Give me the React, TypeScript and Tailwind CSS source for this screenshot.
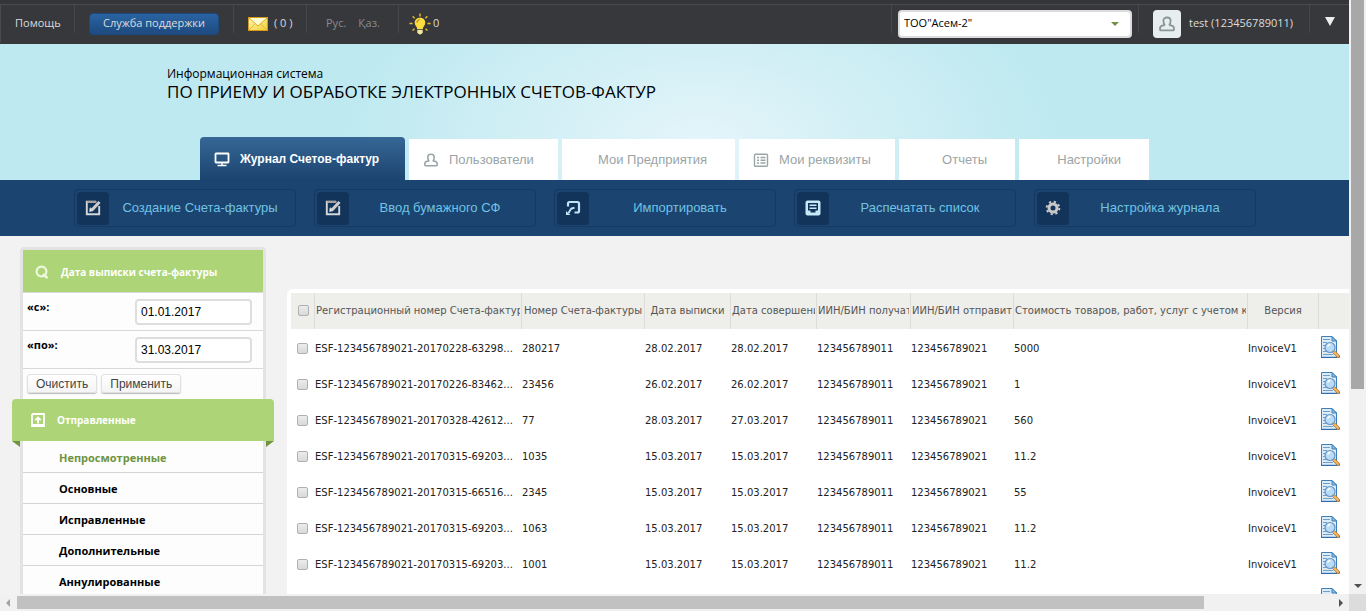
import { useState, type ReactNode } from "react";

const UserIcon = ({ className }: { className: string }) => (
  <svg viewBox="0 0 16 16" className={className} fill="none" stroke="currentColor" strokeWidth="1.6" aria-hidden="true">
    <path d="M6.200 9.200C5 8 4.800 6.500 4.800 5.200 4.800 3.200 6 2.200 8 2.200s3.200 1 3.200 3c0 1.300-.2 2.800-1.400 4" />
    <path d="M6 9.200H4.500Q1.800 9.500 1.800 12v.8q0 .9.9.9h10.600q.9 0 .9-.9V12q0-2.500-2.700-2.800H10" />
  </svg>
);

const MonitorIcon = () => (
  <svg viewBox="0 0 16 16" className="size-4" fill="none" stroke="currentColor" strokeWidth="1.800" aria-hidden="true">
    <rect x="1.500" y="2.500" width="13" height="9" rx="0.500" />
    <path d="M8 11.500v3M3.500 14.500h9" strokeWidth="1.400" />
  </svg>
);

const ListIcon = () => (
  <svg viewBox="0 0 16 16" className="size-4" fill="none" stroke="currentColor" aria-hidden="true">
    <rect x="1.500" y="2.200" width="13" height="12" rx="1" strokeWidth="1.400" />
    <path d="M4 5.500h2M7.500 5.500h5M4 8.200h2M7.500 8.200h5M4 10.900h2M7.500 10.900h5" strokeWidth="1.500" />
  </svg>
);

const EditIcon = () => (
  <svg viewBox="0 0 16 16" className="size-4" fill="none" aria-hidden="true">
    <path d="M14.200 6v8.200H1.800V1.800H11" stroke="#d4d6d8" strokeWidth="1.900" />
    <path d="M11.500 1.800H2" stroke="#a89f98" strokeWidth="1.800" />
    <path d="M5 8l2.300 2.600" stroke="#c9c9c9" strokeWidth="2" />
    <path d="M6.500 10.500l8-8.500" stroke="#cfcfcf" strokeWidth="3" />
    <path d="M4.200 12l.6-3.500 2.800 2.600z" fill="#e8e8e8" />
  </svg>
);

const ImportIcon = () => (
  <svg viewBox="0 0 16 16" className="size-4" fill="none" stroke="#bfe4f5" aria-hidden="true">
    <path d="M3 6.500V3.500q0-1.500 1.500-1.500H12.500q1.500 0 1.500 1.500V11q0 1.500-1.500 1.500H9.500" strokeWidth="2.200" />
    <path d="M9.500 8H8.500Q6 8 5 10.500L3.500 13" strokeWidth="1.800" />
    <path d="M1 11v4h4.500z" fill="#bfe4f5" stroke="none" />
  </svg>
);

const PrintIcon = () => (
  <svg viewBox="0 0 16 16" className="size-4" aria-hidden="true">
    <rect x="0.500" y="0.500" width="15" height="15" rx="2" fill="#c6e8f7" />
    <path d="M3 3h10v7.500h-2.500V12.500h-5V10.500H3z" fill="#12335a" />
    <path d="M4.500 5.300h7M4.500 8.300h7" stroke="#c6e8f7" strokeWidth="1.400" />
  </svg>
);

const GearIcon = () => (
  <svg viewBox="0 0 16 16" className="size-4" stroke="#c9c9c9" fill="none" aria-hidden="true">
    <circle cx="8" cy="8" r="4" strokeWidth="3" />
    <circle cx="8" cy="8" r="6.300" strokeWidth="2" strokeDasharray="2.200 2.750" />
  </svg>
);

const MailIcon = () => (
  <svg viewBox="0 0 20 14" className="h-[14px] w-5" aria-hidden="true">
    <defs>
      <linearGradient id="mail" x1="0" y1="0" x2="1" y2="1">
        <stop offset="0" stopColor="#fff9c0" />
        <stop offset="1" stopColor="#f3cf2c" />
      </linearGradient>
    </defs>
    <rect x="0.500" y="0.500" width="19" height="13" fill="url(#mail)" stroke="#d99a1c" />
    <path d="M1 13 7.500 6.500M19 13 12.500 6.500" stroke="#e6b93c" strokeWidth="1" />
    <path d="M1 1l9 8 9-8" fill="#fffbd0" stroke="#e0a92a" strokeWidth="1" />
  </svg>
);

const BulbIcon = () => (
  <svg viewBox="0 0 22 22" className="size-[22px]" aria-hidden="true">
    <path
      d="M11 0.500v3M3.700 3.200l2 2.200M18.300 3.200l-2 2.200M0.500 10.500h3M21.500 10.500h-3M3.500 17.500l2-1.800M18.500 17.500l-2-1.800"
      stroke="#e9bd2c"
      strokeWidth="1.400"
    />
    <path d="M11 4.800c-3.300 0-5.300 2.300-5.300 5 0 2.500 2.300 3.700 2.600 6.400h5.400c.3-2.700 2.600-3.900 2.600-6.400 0-2.700-2-5-5.300-5z" fill="#fddc3f" />
    <path d="M8 9.500c0-1.500 1-2.600 2.500-2.700" stroke="#7a6517" strokeWidth="1" fill="none" />
    <path d="M8.300 17h5.400v2.500q-1 2-2.700 2t-2.700-2z" fill="#f4e79a" />
  </svg>
);

const SearchIcon = () => (
  <svg viewBox="0 0 14 14" className="size-3.5" fill="none" stroke="#eef8dd" aria-hidden="true">
    <circle cx="6.500" cy="6.500" r="4.900" strokeWidth="2.200" />
    <path d="M8 9l4.500 4.200" strokeWidth="2.600" />
  </svg>
);

const SentIcon = () => (
  <svg viewBox="0 0 14 14" className="size-3.5" fill="none" stroke="#fff" aria-hidden="true">
    <path d="M1 1h12v12H9.500M4.500 13H1V1" strokeWidth="1.800" />
    <path d="M1.500 12.500h11" strokeWidth="3" />
    <path d="M7 10.500V5M4.300 7.200 7 4.500l2.700 2.700" strokeWidth="1.800" />
  </svg>
);

const PreviewIcon = () => (
  <svg viewBox="0 0 20 22" className="h-[22px] w-5" aria-hidden="true">
    <path d="M1.500 0.500h10.500l4.500 4.500v16.500h-15z" fill="#dcebf8" stroke="#3d7fb8" />
    <path d="M12 0.500v4.500h4.500z" fill="#8fbde0" stroke="#3d7fb8" />
    <path d="M1 21.500h16" stroke="#2f6ea8" strokeWidth="1.400" />
    <path d="M3 3.500h7M3 6.500h4M3 9.500h2M3 12.500h2M3 15.500h4M3 18.500h10" stroke="#6d9fcb" strokeWidth="1" />
    <path d="M14 16l4.500 4.500" stroke="#b87532" strokeWidth="3.200" strokeLinecap="round" />
    <path d="M14 16l4 4" stroke="#f7b964" strokeWidth="1.800" strokeLinecap="round" />
    <circle cx="10" cy="11.500" r="5" fill="#b9dcf6" stroke="#6b96c6" strokeWidth="1.200" />
    <path d="M7.500 10.500q1-2 3-2" stroke="#fff" strokeWidth="1.400" fill="none" />
  </svg>
);

const Divider = () => <span className="h-7 w-px shrink-0 self-start bg-[#45474a]" />;

const tabs: { label: string; icon?: ReactNode; width: string }[] = [
  { label: "Пользователи", icon: <UserIcon className="size-4" />, width: "w-[149px]" },
  { label: "Мои Предприятия", width: "w-[173px]" },
  { label: "Мои реквизиты", icon: <ListIcon />, width: "w-[156px]" },
  { label: "Отчеты", width: "w-[116px]" },
  { label: "Настройки", width: "w-[130px]" },
];

const actions = [
  { label: "Создание Счета-фактуры", icon: <EditIcon /> },
  { label: "Ввод бумажного СФ", icon: <EditIcon /> },
  { label: "Импортировать", icon: <ImportIcon /> },
  { label: "Распечатать список", icon: <PrintIcon /> },
  { label: "Настройка журнала", icon: <GearIcon /> },
];

const folders = ["Непросмотренные", "Основные", "Исправленные", "Дополнительные", "Аннулированные"];

const columns = [
  { label: "Регистрационный номер Счета-фактур", width: "w-[207px]", align: "text-left" },
  { label: "Номер Счета-фактуры", width: "w-[123px]", align: "text-center" },
  { label: "Дата выписки", width: "w-[86px]", align: "text-center" },
  { label: "Дата совершени", width: "w-[86px]", align: "text-left" },
  { label: "ИИН/БИН получат", width: "w-[94px]", align: "text-left" },
  { label: "ИИН/БИН отправит", width: "w-[103px]", align: "text-left" },
  { label: "Стоимость товаров, работ, услуг с учетом ко", width: "", align: "text-left" },
  { label: "Версия", width: "w-[71px]", align: "text-center" },
];

const rows = [
  ["ESF-123456789021-20170228-63298...", "280217", "28.02.2017", "28.02.2017", "5000"],
  ["ESF-123456789021-20170226-83462...", "23456", "26.02.2017", "26.02.2017", "1"],
  ["ESF-123456789021-20170328-42612...", "77", "28.03.2017", "27.03.2017", "560"],
  ["ESF-123456789021-20170315-69203...", "1035", "15.03.2017", "15.03.2017", "11.2"],
  ["ESF-123456789021-20170315-66516...", "2345", "15.03.2017", "15.03.2017", "55"],
  ["ESF-123456789021-20170315-69203...", "1063", "15.03.2017", "15.03.2017", "11.2"],
  ["ESF-123456789021-20170315-69203...", "1001", "15.03.2017", "15.03.2017", "11.2"],
].map(([id, num, issued, done, cost]) => [id, num, issued, done, "123456789011", "123456789021", cost, "InvoiceV1"]);
rows.push(["", "", "", "", "", "", "", ""]);

const checkbox =
  "block size-[11px] appearance-none rounded-[2px] border border-[#b0b0b0] bg-linear-to-b from-[#ececec] to-[#d9d9d9] checked:bg-[#5b8ac0]";

function TopBar() {
  return (
    <div className="bg-[#343538] pt-1">
      <div className="flex h-10 items-center border-t border-[#4a4b4e] bg-[#37383b] pb-0.5 font-['Open_Sans',sans-serif] text-[11px] text-[#dcdcdc]">
        <div className="flex h-full w-[74px] items-center border-l border-[#4a4b4e] pl-3.5">
          <a href="#help">Помощь</a>
        </div>
        <Divider />
        <div className="flex w-[158px] justify-center">
          <button className="h-[22px] w-[130px] rounded border border-[#1d4a7e] bg-linear-to-b from-[#2a64a3] to-[#1d4a80]">
            Служба поддержки
          </button>
        </div>
        <Divider />
        <a href="#mail" className="flex w-[72px] items-center gap-1.5 pl-3.5">
          <MailIcon />
          <span className="whitespace-nowrap">( 0 )</span>
        </a>
        <Divider />
        <div className="flex w-[91px] gap-3 pl-[19px] text-[#8b8b8b]">
          <a href="#ru">Рус.</a>
          <a href="#kz">Қаз.</a>
        </div>
        <Divider />
        <a href="#tips" className="flex items-center gap-0.5 pl-2.5">
          <BulbIcon />
          <span>0</span>
        </a>
        <div className="flex-1" />
        <Divider />
        <div className="relative ml-1.5">
          <select
            aria-label="Организация"
            className="block h-7 w-[234px] appearance-none rounded border-2 border-[#dcdcdc] bg-white pl-1 text-[11px] text-black"
          >
            <option>ТОО"Асем-2"</option>
          </select>
          <svg viewBox="0 0 8 4" className="pointer-events-none absolute top-3 right-[13px] h-1 w-2" aria-hidden="true">
            <path d="M0 0h8L4 4z" fill="#738f45" />
          </svg>
        </div>
        <div className="w-1.5" />
        <Divider />
        <span className="ml-3.5 flex size-7 items-center justify-center rounded-sm bg-[#e6eef0] text-[#8d9496]">
          <UserIcon className="size-[18px]" />
        </span>
        <span className="w-[128px] pl-2 whitespace-nowrap">test (123456789011)</span>
        <Divider />
        <button aria-label="Меню" className="mr-3.5 ml-[15px] text-[#eeeeee]">
          <svg viewBox="0 0 10 9" className="mb-1 h-[9px] w-2.5" fill="currentColor" aria-hidden="true">
            <path d="M0 0h10L5 9z" />
          </svg>
        </button>
      </div>
    </div>
  );
}

function Sidebar() {
  const [from, setFrom] = useState("01.01.2017");
  const [to, setTo] = useState("31.03.2017");
  const field = "h-[26px] w-[117px] rounded border-2 border-[#dedede] bg-white px-1 font-['Liberation_Sans',sans-serif] text-xs font-normal text-black";
  const small =
    "h-[19px] rounded-[3px] border border-[#e0e0e0] bg-linear-to-b from-white to-[#f4f4f4] px-2 text-xs leading-4 text-[#444444] shadow-[0_1px_1px_#bbbbbb]";
  return (
    <aside className="mt-[11px] w-[262px] shrink-0 font-['Open_Sans',sans-serif] text-[11px] font-bold">
      <div className="mx-2 rounded-t border-x-[3px] border-t-[3px] border-[#e3e3e3] bg-[#fdfdfd]">
        <h2 className="flex h-[42px] items-center gap-3 bg-[#add578] pt-0.5 pl-3 text-[10px] text-white">
          <SearchIcon />
          Дата выписки счета-фактуры
        </h2>
        <div className="flex h-[38px] justify-between border-t border-[#d8d8d8] pt-1.5 pr-[11px] pl-1">
          <label htmlFor="from">«с»:</label>
          <input id="from" className={field} value={from} onChange={(e) => setFrom(e.target.value)} />
        </div>
        <div className="flex h-[38px] justify-between border-t border-[#d8d8d8] pt-1.5 pr-[11px] pl-1">
          <label htmlFor="to">«по»:</label>
          <input id="to" className={field} value={to} onChange={(e) => setTo(e.target.value)} />
        </div>
        <div className="flex h-[31px] gap-1 border-t border-[#d8d8d8] pt-[5px] pl-1 font-['Liberation_Sans',sans-serif] font-normal">
          <button className={small}>Очистить</button>
          <button className={small}>Применить</button>
        </div>
      </div>
      <h2 className="flex h-[42px] items-center gap-3 rounded-t bg-[#add578] pl-[19px] text-[10px] text-white">
        <SentIcon />
        Отправленные
      </h2>
      <div className="flex items-start">
        <svg viewBox="0 0 8 6" className="h-1.5 w-2" aria-hidden="true">
          <path d="M0 0h8v6z" fill="#6f9440" />
        </svg>
        <ul className="flex-1 border-x-[3px] border-[#e3e3e3] bg-[#fdfdfd] pt-px">
          {folders.map((f, i) => (
            <li key={f} className="h-[31px] border-b border-[#d5d5d5]">
              <a href="#folder" className={`block pl-9 leading-8 ${i === 0 ? "text-[#6f9440]" : "text-black"}`}>
                {f}
              </a>
            </li>
          ))}
        </ul>
        <svg viewBox="0 0 8 6" className="h-1.5 w-2" aria-hidden="true">
          <path d="M0 0h8L0 6z" fill="#6f9440" />
        </svg>
      </div>
    </aside>
  );
}

function Journal() {
  return (
    <main className="mt-[53px] ml-[13px] min-w-0 flex-1 rounded-tl-md bg-white pt-1 pl-1">
      <table className="w-full table-fixed border-separate border-spacing-0 font-['DejaVu_Sans',sans-serif] text-[10px] text-[#222222]">
        <thead>
          <tr className="h-9 bg-[#eeeeea] text-[#555555]">
            <th className="w-[23px] pb-0.5 pl-[7px]">
              <input type="checkbox" aria-label="Выбрать все" className={checkbox} />
            </th>
            {columns.map((c) => (
              <th key={c.label} className={`border-l border-[#dcdcdc] px-px pb-0.5 font-normal ${c.width} ${c.align}`}>
                <div className="overflow-hidden whitespace-nowrap">{c.label}</div>
              </th>
            ))}
            <th className="w-[31px] border-l border-[#dcdcdc]" />
          </tr>
        </thead>
        <tbody>
          {rows.map((r, i) => (
            <tr key={i} className="h-9">
              <td className="pt-0.5 pl-1.5">
                <input type="checkbox" aria-label="Выбрать строку" className={checkbox} />
              </td>
              {r.map((v, j) => (
                <td key={j} className="px-px pt-0.5 whitespace-nowrap">
                  {v}
                </td>
              ))}
              <td className="pl-0.5">
                <button aria-label="Просмотр" className="block">
                  <PreviewIcon />
                </button>
              </td>
            </tr>
          ))}
        </tbody>
      </table>
    </main>
  );
}

export default function App() {
  return (
    <div className="grid h-screen grid-cols-[minmax(0,1fr)_17px] grid-rows-[minmax(0,1fr)_17px] bg-[#f1f1f1]">
      <div className="overflow-hidden bg-[#f2f2f2]">
        <TopBar />
        <header className="flex h-[136px] flex-col justify-between bg-[#bee9f0] bg-[radial-gradient(ellipse_360px_200px_at_700px_100px,#e4f5fa,#bee9f0)]">
          <h1 className="pt-[22px] pl-[167px] font-['Open_Sans',sans-serif] text-black">
            <span className="block text-xs leading-4">Информационная система</span>
            <span className="block text-[17px] leading-5">ПО ПРИЕМУ И ОБРАБОТКЕ ЭЛЕКТРОННЫХ СЧЕТОВ-ФАКТУР</span>
          </h1>
          <nav className="flex items-end gap-1 pl-[200px] font-['Liberation_Sans',sans-serif] text-[13px] text-[#9aa5a7]">
            <a
              href="#journal"
              className="flex h-[43px] w-[205px] items-center gap-2.5 rounded-t bg-linear-to-b from-[#366795] to-[#1c4470] pl-3.5 text-xs font-bold text-white"
            >
              <MonitorIcon />
              Журнал Счетов-фактур
            </a>
            {tabs.map((t) => (
              <a
                key={t.label}
                href="#tab"
                className={`flex h-[41px] items-center gap-2.5 bg-white ${t.width} ${t.icon ? "pl-3.5" : "justify-end pr-7"}`}
              >
                {t.icon}
                {t.label}
              </a>
            ))}
          </nav>
        </header>
        <div className="flex h-14 items-center gap-[18px] bg-[#1c4470] pl-[74px] font-['Liberation_Sans',sans-serif] text-[13px] text-[#6fc3e4]">
          {actions.map((a) => (
            <button key={a.label} className="flex h-[38px] w-[222px] items-center rounded border border-[#16395f] p-0.5">
              <span className="flex h-[33px] w-8 items-center justify-center rounded bg-[#12335a]">{a.icon}</span>
              <span className="flex-1 pr-0.5 text-center">{a.label}</span>
            </button>
          ))}
        </div>
        <div className="flex items-start pl-3">
          <Sidebar />
          <Journal />
        </div>
      </div>
      <div aria-hidden="true" className="flex flex-col items-center justify-between">
        <div className="h-[389px] w-[13px] bg-[#a8a8a8]" />
        <svg viewBox="0 0 8 4" className="mb-1.5 h-1 w-2">
          <path d="M0 0h8L4 4z" fill="#505050" />
        </svg>
      </div>
      <div aria-hidden="true" className="flex items-center">
        <svg viewBox="0 0 4 8" className="mr-[7px] ml-1.5 h-2 w-1">
          <path d="M4 0v8L0 4z" fill="#a3a3a3" />
        </svg>
        <div className="h-[13px] w-[88%] bg-[#c1c1c1]" />
        <svg viewBox="0 0 4 8" className="mr-1.5 ml-auto h-2 w-1">
          <path d="M0 0v8l4-4z" fill="#505050" />
        </svg>
      </div>
      <div className="bg-[#dcdcdc]" />
    </div>
  );
}
